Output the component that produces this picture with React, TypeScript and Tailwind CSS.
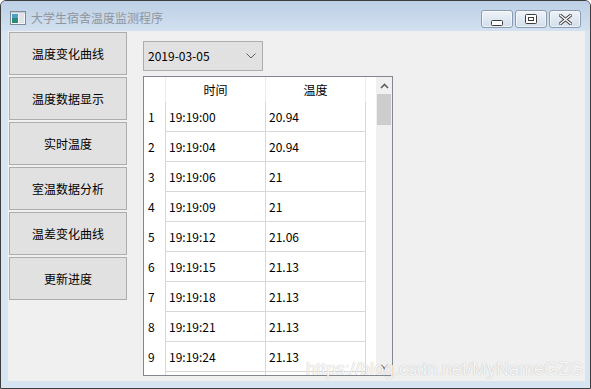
import React from "react";

const rows: [string, string][] = [
  ["19:19:00", "20.94"],
  ["19:19:04", "20.94"],
  ["19:19:06", "21"],
  ["19:19:09", "21"],
  ["19:19:12", "21.06"],
  ["19:19:15", "21.13"],
  ["19:19:18", "21.13"],
  ["19:19:21", "21.13"],
  ["19:19:24", "21.13"],
];

const buttons = ["温度变化曲线", "温度数据显示", "实时温度", "室温数据分析", "温差变化曲线", "更新进度"];

const font = { fontFamily: '"Noto Sans CJK SC", "Noto Sans", sans-serif' };

function CapButton({ children }: { children: React.ReactNode }) {
  return (
    <div className="w-[32px] h-[18px] rounded-[3px] border border-[#8b9bb0] bg-gradient-to-b from-[#eef3f8] to-[#d2deeb] flex items-center justify-center shadow-[inset_0_0_0_1px_rgba(255,255,255,0.6)]">
      {children}
    </div>
  );
}

export default function App() {
  return (
    <div className="w-[591px] h-[389px] bg-white" style={font}>
      <div className="relative w-full h-full border border-[#3e3e3e] rounded-t-[6px] bg-[#d7e4f2] flex flex-col overflow-hidden">
        {/* title bar */}
        <div className="h-[30px] shrink-0 bg-gradient-to-b from-[#bccfe5] to-[#d3e1f1] flex items-start">
          <div className="flex items-center mt-[10px] ml-[9px]">
            <svg width="16" height="14" viewBox="0 0 16 14">
              <rect x="0.5" y="0.5" width="15" height="13" fill="#f4f6f8" stroke="#7d8a99" />
              <rect x="2" y="3" width="6" height="9" fill="#2e8b7a" />
              <rect x="2" y="3" width="6" height="4" fill="#4aa0c8" />
              <rect x="9" y="3" width="5" height="9" fill="#dfe4ea" />
              <rect x="1" y="1" width="14" height="1.5" fill="#c9d3de" />
            </svg>
            <span className="ml-[5px] text-[12px] leading-none text-[#8f959c]">大学生宿舍温度监测程序</span>
          </div>
          <div className="ml-auto mt-[9px] mr-[9px] flex gap-[2px]">
            <CapButton>
              <svg width="12" height="6" viewBox="0 0 12 6" className="mt-[7px]">
                <rect x="0.5" y="0.5" width="11" height="5" rx="1" fill="#fff" stroke="#3c3c3c" />
              </svg>
            </CapButton>
            <CapButton>
              <svg width="12" height="10" viewBox="0 0 12 10">
                <rect x="0.5" y="0.5" width="11" height="9" rx="1" fill="#fff" stroke="#3c3c3c" />
                <rect x="3" y="3" width="6" height="4" fill="#3c3c3c" />
                <rect x="4" y="4" width="4" height="2" fill="#fff" />
              </svg>
            </CapButton>
            <CapButton>
              <svg width="13" height="11" viewBox="0 0 13 11">
                <path d="M1 1 L12 10 M12 1 L1 10" stroke="#3c3c3c" strokeWidth="3.2" strokeLinecap="round" />
                <path d="M1 1 L12 10 M12 1 L1 10" stroke="#ffffff" strokeWidth="1.4" strokeLinecap="round" />
              </svg>
            </CapButton>
          </div>
        </div>

        {/* client area */}
        <div className="ml-[7px] mr-[5px] h-[350px] shrink-0 bg-[#f0f0f0] flex">
          <div className="pl-[1px] pt-[1px] flex flex-col gap-[2px]">
            {buttons.map((b) => (
              <div
                key={b}
                className="w-[118px] h-[43px] border border-[#adadad] bg-[#e1e1e1] flex items-center justify-center text-[12px] text-black"
              >
                {b}
              </div>
            ))}
          </div>

          <div className="ml-[16px] pt-[10px] flex flex-col">
            {/* combo */}
            <div className="w-[120px] h-[30px] border border-[#adadad] bg-[#e1e1e1] flex items-center pl-[4px] pr-[6px] text-[12px] text-black">
              <span>2019-03-05</span>
              <svg width="10" height="6" viewBox="0 0 10 6" className="ml-auto">
                <path d="M0.5 0.5 L5 5 L9.5 0.5" fill="none" stroke="#606060" strokeWidth="1" />
              </svg>
            </div>

            {/* table */}
            <div className="mt-[5px] w-[250px] h-[300px] border border-[#828790] bg-white flex overflow-hidden text-[12px] text-black">
              <div className="flex flex-col">
                {/* header */}
                <div className="h-[25px] shrink-0 flex">
                  <div className="w-[22px] border-r border-[#ececec]" />
                  <div className="w-[100px] border-r border-[#ececec] flex items-center justify-center">时间</div>
                  <div className="w-[100px] border-r border-[#ececec] flex items-center justify-center">温度</div>
                </div>
                {rows.map(([t, v], i) => (
                  <div key={i} className="h-[30px] shrink-0 flex">
                    <div className="w-[22px] border-r border-[#d8d8d8] flex items-center pl-[4px]">{i + 1}</div>
                    <div className="w-[100px] border-r border-b border-[#d8d8d8] flex items-center pl-[3px]">{t}</div>
                    <div className="w-[100px] border-r border-b border-[#d8d8d8] flex items-center pl-[3px]">{v}</div>
                  </div>
                ))}
                <div className="h-[30px] shrink-0 flex">
                  <div className="w-[22px] border-r border-[#d8d8d8]" />
                  <div className="w-[100px] border-r border-b border-[#d8d8d8]" />
                  <div className="w-[100px] border-r border-b border-[#d8d8d8]" />
                </div>
              </div>
              <div className="flex-1" />
              {/* scrollbar */}
              <div className="w-[16px] h-full bg-[#f0f0f0] flex flex-col items-center">
                <div className="h-[17px] shrink-0 flex items-center justify-center">
                  <svg width="9" height="6" viewBox="0 0 9 6">
                    <path d="M1 5 L4.5 1.5 L8 5" fill="none" stroke="#606060" strokeWidth="1.6" />
                  </svg>
                </div>
                <div className="w-[14px] h-[31px] bg-[#cdcdcd]" />
                <div className="flex-1" />
                <div className="h-[17px] shrink-0 flex items-center justify-center">
                  <svg width="9" height="6" viewBox="0 0 9 6">
                    <path d="M1 1 L4.5 4.5 L8 1" fill="none" stroke="#606060" strokeWidth="1.6" />
                  </svg>
                </div>
              </div>
            </div>
          </div>
        </div>

        <div
          className="absolute right-[7px] bottom-[10px] text-[18px] leading-none text-white/90"
          style={{ fontFamily: '"Liberation Sans", Arial, sans-serif', textShadow: "0 0 1px rgba(110,110,110,0.6)" }}
        >
          https://blog.csdn.net/MyNameGZG
        </div>
      </div>
    </div>
  );
}
